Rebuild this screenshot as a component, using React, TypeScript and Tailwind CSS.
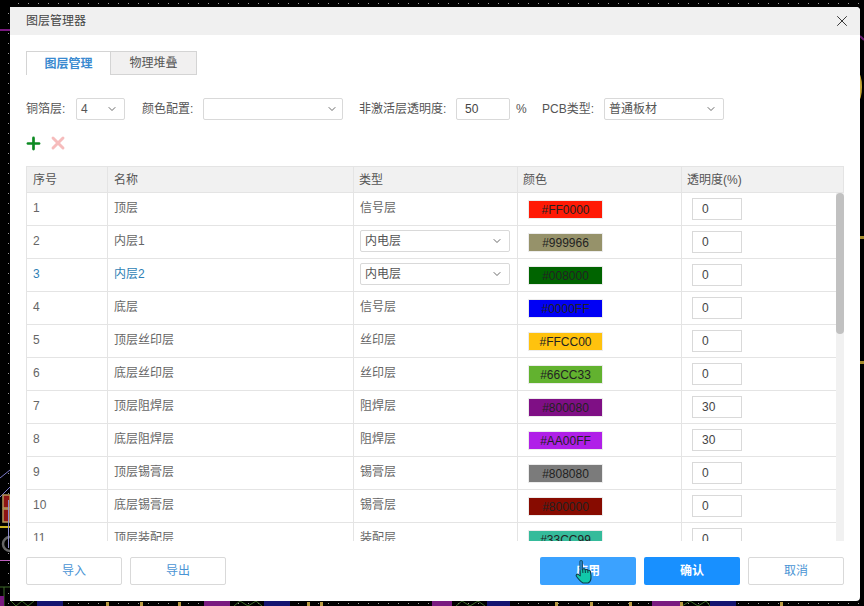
import { ChevronDown, Plus, X } from "lucide-react"

type Layer = {
  no: number
  name: string
  type: string
  color: string
  /** what the swatch really looks like in the capture */
  fill: string
  alpha: string
  select?: boolean
  active?: boolean
}

const LAYERS: Layer[] = [
  { no: 1, name: "顶层", type: "信号层", color: "#FF0000", fill: "#ff1a05", alpha: "0" },
  { no: 2, name: "内层1", type: "内电层", color: "#999966", fill: "#96926a", alpha: "0", select: true },
  { no: 3, name: "内层2", type: "内电层", color: "#008000", fill: "#006400", alpha: "0", select: true, active: true },
  { no: 4, name: "底层", type: "信号层", color: "#0000FF", fill: "#0000f5", alpha: "0" },
  { no: 5, name: "顶层丝印层", type: "丝印层", color: "#FFCC00", fill: "#ffc20e", alpha: "0" },
  { no: 6, name: "底层丝印层", type: "丝印层", color: "#66CC33", fill: "#62b22f", alpha: "0" },
  { no: 7, name: "顶层阻焊层", type: "阻焊层", color: "#800080", fill: "#7f0f85", alpha: "30" },
  { no: 8, name: "底层阻焊层", type: "阻焊层", color: "#AA00FF", fill: "#b01fe8", alpha: "30" },
  { no: 9, name: "顶层锡膏层", type: "锡膏层", color: "#808080", fill: "#7b7b7b", alpha: "0" },
  { no: 10, name: "底层锡膏层", type: "锡膏层", color: "#800000", fill: "#870b00", alpha: "0" },
  { no: 11, name: "顶层装配层", type: "装配层", color: "#33CC99", fill: "#35bb9b", alpha: "0" },
]

// the PCB canvas that shows around the dialog
function PcbBackdrop() {
  const topDots = Array.from({ length: 86 }, (_, i) => 18 + i * 10)
  const leftDots = Array.from({ length: 60 }, (_, i) => 13 + i * 10)
  const bottomDots = Array.from({ length: 84 }, (_, i) => 68 + i * 10)
  return (
    <svg className="absolute inset-0" width="864" height="606" viewBox="0 0 864 606">
      <rect width="864" height="606" fill="#000" />
      {topDots.map((x) => (
        <rect key={x} x={x} y="3" width="1" height="1" fill="#9a9a9a" />
      ))}
      {leftDots.map((y) => (
        <rect key={y} x="8" y={y} width="1" height="1" fill="#9a9a9a" />
      ))}
      {bottomDots.map((x) => (
        <rect key={x} x={x} y="603" width="1" height="1" fill="#9a9a9a" />
      ))}
      <rect x="0" y="29" width="10" height="2" fill="#7a1a80" />
      <path d="M860 36 L864 40" stroke="#6a1a70" strokeWidth="2" />
      <ellipse cx="858" cy="87" rx="4" ry="14" fill="#c9a93a" />
      <rect x="860" y="236" width="4" height="3" fill="#a88c2c" />
      <rect x="860" y="361" width="4" height="3" fill="#a88c2c" />
      <path d="M0 478 L10 470 M0 497 L10 487" stroke="#7b78c8" strokeWidth="1" />
      <rect x="3" y="495" width="7" height="13" fill="#8c1414" stroke="#b8975a" strokeWidth="1.5" />
      <rect x="3" y="509" width="7" height="13" fill="#8c1414" stroke="#b8975a" strokeWidth="1.5" />
      <rect x="0" y="526" width="10" height="2" fill="#c9b020" />
      <circle cx="10" cy="544" r="7" fill="none" stroke="#666" strokeWidth="2.5" />
      <rect x="8" y="500" width="1" height="48" fill="#8f8fd0" />
      <rect x="0" y="560" width="10" height="1" fill="#c060c0" />
      <path d="M0 587 H10 M4 587 V606" stroke="#3f6a2a" strokeWidth="1" />
      <rect x="0" y="596" width="4" height="10" fill="#7a1a80" />
      <rect x="37" y="601" width="26" height="5" fill="#141470" />
      <path d="M11 601 L16 606 L22 601 L28 606 L34 601" stroke="#3f6a2a" fill="none" />
      <rect x="204" y="601" width="26" height="5" fill="#7a1a80" />
      <path d="M234 606 L240 601 L248 606 L256 601 L262 606" stroke="#3f6a2a" fill="none" />
      <rect x="264" y="601" width="26" height="5" fill="#141470" />
      <rect x="432" y="601" width="20" height="5" fill="#7a1a80" />
      <path d="M456 606 L462 601 L470 606 L478 601 L485 606" stroke="#3f6a2a" fill="none" />
      <rect x="487" y="601" width="23" height="5" fill="#141470" />
      <rect x="652" y="601" width="28" height="5" fill="#7a1a80" />
      <path d="M682 606 L690 601 L698 606 L706 601 L710 606" stroke="#3f6a2a" fill="none" />
      <rect x="710" y="601" width="26" height="5" fill="#141470" />
      {[106, 140, 178, 307, 320, 555, 590, 629, 680, 780].map((x) => (
        <rect key={x} x={x} y="602" width="3" height="4" fill="#b89a40" />
      ))}
    </svg>
  )
}

function SelectBox({ value, className }: { value: string; className: string }) {
  return (
    <div
      className={`flex h-[22px] items-center justify-between rounded-[2px] border border-[#d9d9d9] bg-white pl-[4px] text-[#555] ${className}`}
    >
      <span>{value}</span>
      <ChevronDown size={12} strokeWidth={1.6} className="text-[#444]" />
    </div>
  )
}

function FooterButton({ label, className }: { label: string; className: string }) {
  return (
    <button type="button" className={`h-[28px] w-[96px] rounded-[2px] text-[12px] ${className}`}>
      {label}
    </button>
  )
}

function LayerRow({ layer }: { layer: Layer }) {
  const text = layer.active ? "text-[#2f7fb5]" : "text-[#666]"
  return (
    <div className={`flex h-[33px] shrink-0 border-b border-[#e4e4e4] ${text}`}>
      <div className="flex w-[81px] items-center border-r border-[#e4e4e4] pb-[2px] pl-[6px]">{layer.no}</div>
      <div className="flex w-[246px] items-center border-r border-[#e4e4e4] pb-[2px] pl-[6px]">{layer.name}</div>
      <div className="flex w-[164px] items-center border-r border-[#e4e4e4] pl-[6px] text-[#666]">
        {layer.select ? (
          <SelectBox value={layer.type} className="mb-[2px] w-[150px] pr-[6px]" />
        ) : (
          <span className="pb-[2px]">{layer.type}</span>
        )}
      </div>
      <div className="w-[164px] border-r border-[#e4e4e4] pl-[10px] pt-[7px]">
        <div
          className="flex h-[19px] w-[75px] items-center justify-center border border-[#ececec] text-[12px] text-[#222]"
          style={{ backgroundColor: layer.fill }}
        >
          {layer.color}
        </div>
      </div>
      <div className="flex-1 pl-[10px] pt-[5px]">
        <div className="flex h-[22px] w-[50px] items-center border border-[#d9d9d9] pl-[9px] text-[#444]">
          {layer.alpha}
        </div>
      </div>
    </div>
  )
}

export default function App() {
  return (
    <div
      className="relative h-[606px] w-[864px] overflow-hidden bg-black pl-[10px] pt-[7px] text-[12px] text-[#555]"
      style={{ fontFamily: '"Liberation Sans", "Noto Sans CJK SC", sans-serif' }}
    >
      <PcbBackdrop />

      <div className="relative flex h-[594px] w-[850px] flex-col rounded-tr-[4px] rounded-br-[4px] bg-white">
        {/* Title bar */}
        <div className="flex h-[28px] shrink-0 items-center justify-between rounded-tr-[4px] bg-[#f0f0f0] pl-[16px] pr-[9px] text-[#444]">
          <span>图层管理器</span>
          <X size={18} strokeWidth={1.3} className="text-[#333]" />
        </div>

        {/* Tabs */}
        <div className="ml-[16px] mt-[16px] flex h-[24px] w-[171px]">
          <div className="flex w-[85px] items-center justify-center border-l border-r border-t border-[#d4d4d4] font-bold text-[#3a8ad0]">
            图层管理
          </div>
          <div className="flex w-[86px] items-center justify-center border-b border-r border-t border-[#d4d4d4] bg-[#f1f0f0] text-[#555]">
            物理堆叠
          </div>
        </div>

        {/* Settings row */}
        <div className="ml-[16px] mt-[23px] flex h-[22px] items-center">
          <span className="w-[50px]">铜箔层:</span>
          <SelectBox value="4" className="w-[49px] pr-[6px]" />
          <span className="ml-[17px] w-[61px]">颜色配置:</span>
          <SelectBox value="" className="w-[140px] pr-[4px]" />
          <span className="ml-[16px] w-[97px]">非激活层透明度:</span>
          <div className="flex h-[22px] w-[54px] items-center rounded-[2px] border border-[#d9d9d9] pl-[8px] text-[#444]">
            50
          </div>
          <span className="ml-[6px] w-[26px]">%</span>
          <span className="w-[62px]">PCB类型:</span>
          <SelectBox value="普通板材" className="w-[120px] pr-[6px]" />
        </div>

        {/* Add / remove */}
        <div className="ml-[14px] mt-[15px] flex h-[16px] items-center gap-[5px]">
          <Plus size={19} strokeWidth={3.4} className="text-[#0c8a22]" />
          <X size={20} strokeWidth={3.5} className="text-[#f6bcbc]" />
        </div>

        {/* Layer table */}
        <div className="ml-[16px] mt-[15px] flex h-[375px] w-[818px] flex-col overflow-hidden">
          <div className="flex h-[27px] shrink-0 border border-[#e4e4e4] bg-[#f1f1f1]">
            <div className="flex w-[81px] items-center border-r border-[#e4e4e4] pl-[6px]">序号</div>
            <div className="flex w-[246px] items-center border-r border-[#e4e4e4] pl-[6px]">名称</div>
            <div className="flex w-[164px] items-center border-r border-[#e4e4e4] pl-[5px]">类型</div>
            <div className="flex w-[164px] items-center border-r border-[#e4e4e4] pl-[5px]">颜色</div>
            <div className="flex flex-1 items-center pl-[5px]">透明度(%)</div>
          </div>
          <div className="flex min-h-0 flex-1">
            <div className="flex min-w-0 flex-1 flex-col overflow-hidden border-l border-[#e4e4e4]">
              {LAYERS.map((layer) => (
                <LayerRow key={layer.no} layer={layer} />
              ))}
            </div>
            <div className="w-[8px] shrink-0 bg-[#f1f1f1]">
              <div className="h-[141px] w-[8px] rounded-[4px] bg-[#c1c1c1]" />
            </div>
          </div>
        </div>

        {/* Footer */}
        <div className="ml-[16px] mt-[16px] flex w-[818px]">
          <FooterButton label="导入" className="border border-[#d9d9d9] text-[#4a94d4]" />
          <FooterButton label="导出" className="ml-[8px] border border-[#d9d9d9] text-[#4a94d4]" />
          <FooterButton label="应用" className="ml-auto bg-[#3ba2ff] font-bold text-white" />
          <FooterButton label="确认" className="ml-[8px] bg-[#1890ff] font-bold text-white" />
          <FooterButton label="取消" className="ml-[8px] border border-[#d9d9d9] text-[#4a94d4]" />
        </div>

        {/* Mouse pointer over the apply button */}
        <svg
          className="absolute left-[565px] top-[553px]"
          width="20"
          height="25"
          viewBox="0 0 20 25"
        >
          <path
            d="M5 1.5 C5 0.5 7.2 0.5 7.2 1.5 L7.6 9 C8.6 8.6 9.8 8.8 10.2 9.6 C11.2 9.2 12.4 9.5 12.8 10.4 C13.8 10.1 15.2 10.5 15.4 11.5 L16 16 C16.2 19 15.5 22 13 23 L8 23 C5.8 22 4.2 20 1.5 16.5 C0.6 15.2 1.8 13.6 3.2 14.4 L5.2 15.8 Z"
            fill="#11c9a9"
            stroke="#0d3d4a"
            strokeWidth="1.1"
            strokeLinejoin="round"
          />
          <path
            d="M5.1 1.5 C5.1 0.7 7.1 0.7 7.1 1.5 L7.5 9.5 L5.3 10.5 Z"
            fill="#2a7fc0"
          />
          <path d="M7.6 9 L7.9 13 M10.2 9.6 L10.4 13 M12.8 10.4 L12.9 13" stroke="#0d3d4a" strokeWidth="1" fill="none" />
        </svg>
      </div>
    </div>
  )
}
